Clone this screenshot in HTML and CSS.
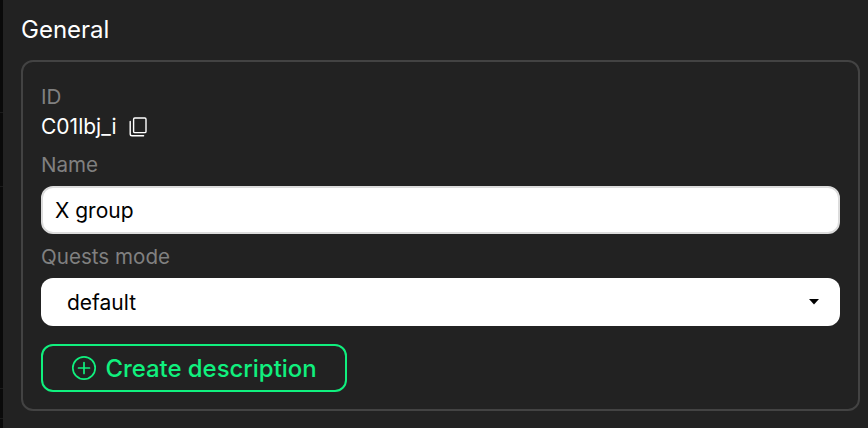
FILE: index.html
```html
<!DOCTYPE html>
<html lang="en">
<head>
<meta charset="utf-8">
<title>General</title>
<link rel="stylesheet" href="styles.css">
</head>
<body>
<main class="page">
  <h2 class="title">General</h2>
  <section class="card">
    <div class="label label-id">ID</div>
    <div class="id-row">
      <span>C01lbj_i</span>
      <svg class="copy" viewBox="0 0 18 20" width="18" height="20" fill="none" stroke="currentColor" stroke-width="1.4" stroke-linejoin="round" stroke-linecap="round">
        <rect x="4.6" y="1" width="12.4" height="14.6" rx="1.2"/>
        <path d="M1.2 4.4V17A1.8 1.8 0 0 0 3 18.8H14.6"/>
      </svg>
    </div>
    <label class="label label-name" for="name">Name</label>
    <input class="input" id="name" type="text" value="X group">
    <div class="label label-mode">Quests mode</div>
    <div class="select">
      <span>default</span>
      <svg class="caret" viewBox="0 0 10 6" width="10" height="6"><path d="M0 0H10L5 5.6Z" fill="currentColor"/></svg>
    </div>
    <button class="create" type="button">
      <svg viewBox="0 0 26 26" width="26" height="26" fill="none" stroke="currentColor" stroke-width="1.7" stroke-linecap="round">
        <circle cx="13" cy="13" r="11.2"/>
        <path d="M13 7.5V18.5M7.5 13H18.5"/>
      </svg>
      <span>Create description</span>
    </button>
  </section>
</main>
</body>
</html>
```
FILE: styles.css
```css
* { box-sizing: border-box; }
html, body { margin: 0; height: 100%; }
body {
  background: #222222;
  color: #fff;
  font-family: Inter, "Liberation Sans", sans-serif;
  overflow: hidden;
}
.page {
  width: 868px;
  height: 428px;
  padding: 15px 8px 0 21px;
  background: linear-gradient(to bottom,
    #0a0a0a 0 112px, #1b1b1b 112px 113px,
    #0a0a0a 113px 186px, #1b1b1b 186px 187px,
    #0a0a0a 187px 388px, #1b1b1b 388px 389px,
    #0a0a0a 389px 418px, #1b1b1b 418px 419px,
    #0a0a0a 419px) left top / 3px 100% no-repeat;
}
.title {
  margin: 0;
  font-size: 24px;
  font-weight: 400;
  line-height: 29px;
}
.card {
  margin-top: 16px;
  height: 351px;
  border: 2px solid #434343;
  border-radius: 12px;
  padding: 23px 18px 0;
  display: flex;
  flex-direction: column;
}
.label {
  font-size: 20.6px;
  line-height: 24px;
  color: #808080;
}
.id-row {
  display: flex;
  align-items: center;
  gap: 12px;
  font-size: 21px;
  line-height: 26px;
  font-weight: 400;
  margin-top: 5px;
}
.copy { color: #fff; }
.label-name { margin-top: 13px; }
.input {
  margin-top: 9px;
  height: 48px;
  width: 100%;
  border: 2px solid #dcdcdc;
  border-radius: 12px;
  background: #fff;
  color: #000;
  padding: 0 12px;
  font: 400 21px Inter, "Liberation Sans", sans-serif;
  outline: none;
}
.label-mode { margin-top: 11px; }
.select {
  margin-top: 9px;
  height: 48px;
  border-radius: 12px;
  background: #fff;
  color: #000;
  padding: 0 21px 0 26px;
  font-size: 21px;
  font-weight: 400;
  display: flex;
  align-items: center;
  justify-content: space-between;
}
.create {
  margin-top: 18px;
  width: 306px;
  height: 48px;
  border: 2px solid #10f07e;
  border-radius: 12px;
  background: transparent;
  color: #10f07e;
  font: 500 23.9px Inter, "Liberation Sans", sans-serif;
  display: flex;
  align-items: center;
  justify-content: center;
  gap: 8px;
  padding: 0;
}
```
